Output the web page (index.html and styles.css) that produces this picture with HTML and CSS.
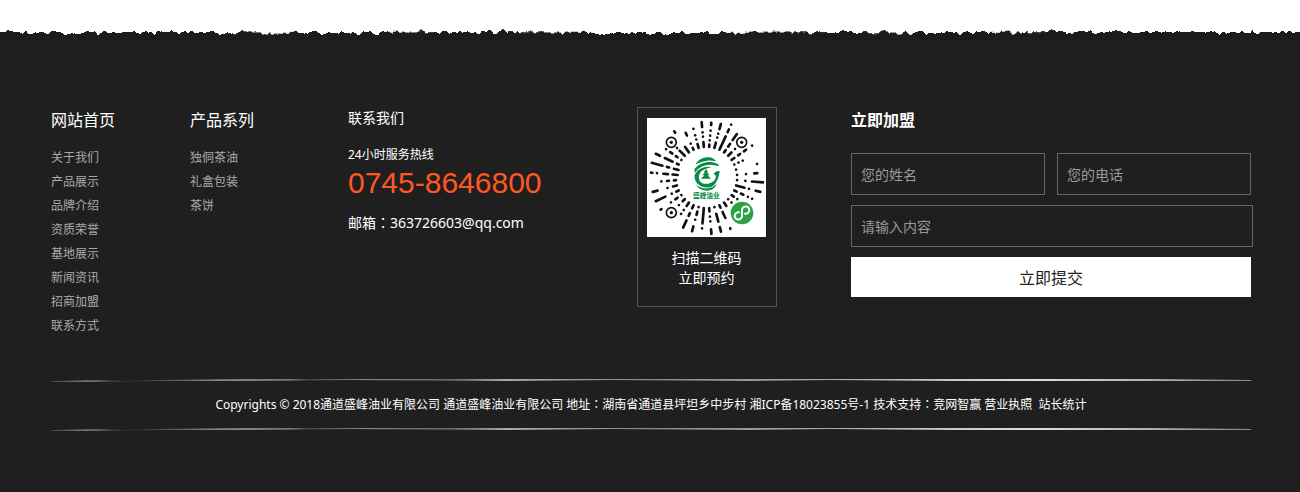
FILE: index.html
```html
<!DOCTYPE html>
<html lang="zh-CN">
<head>
<meta charset="utf-8">
<title>盛峰油业</title>
<link rel="stylesheet" href="styles.css">
</head>
<body>
<footer class="footer">
  <svg class="torn" viewBox="0 0 1300 12" preserveAspectRatio="none" aria-hidden="true">
    <filter id="rough" x="0" y="-0.3" width="1" height="1.3">
      <feTurbulence type="fractalNoise" baseFrequency="0.16 0.08" numOctaves="2" seed="8"/>
      <feDisplacementMap in="SourceGraphic" scale="9" xChannelSelector="R" yChannelSelector="G"/>
    </filter>
    <path filter="url(#rough)" fill="#1f1f1f" d="M-20 30V4H0L90 4 140 4 220 4 300 5 380 5 440 4 500 4 600 5 720 5 830 4 860 4 920 5 980 5 1060 4 1180 4 1250 4H1320V30Z"/>
  </svg>
  <div class="body">
    <div class="columns">
      <nav class="nav">
        <h2><a href="#">网站首页</a></h2>
        <ul>
          <li><a href="#">关于我们</a></li>
          <li><a href="#">产品展示</a></li>
          <li><a href="#">品牌介绍</a></li>
          <li><a href="#">资质荣誉</a></li>
          <li><a href="#">基地展示</a></li>
          <li><a href="#">新闻资讯</a></li>
          <li><a href="#">招商加盟</a></li>
          <li><a href="#">联系方式</a></li>
        </ul>
      </nav>
      <nav class="nav">
        <h2><a href="#">产品系列</a></h2>
        <ul>
          <li><a href="#">独侗茶油</a></li>
          <li><a href="#">礼盒包装</a></li>
          <li><a href="#">茶饼</a></li>
        </ul>
      </nav>
      <section class="contact">
        <h2>联系我们</h2>
        <p class="hotline">24小时服务热线</p>
        <p class="phone">0745-8646800</p>
        <p class="email">邮箱<span class="colon" lang="zh-TW">：</span>363726603@qq.com</p>
      </section>
      <figure class="code">
        <svg class="qr" viewBox="0 0 357 357" role="img" aria-label="小程序码">
          <rect width="357" height="357" fill="#fff"/>
          <g transform="translate(178.5 178.5)" fill="none" stroke="#111" stroke-width="8" stroke-linecap="round">
            <path transform="rotate(-5)" d="M0-92v-15M0-123h0M0-136h0M0-152v-15"/>
            <path transform="rotate(5)" d="M0-92v-7M0-112h0M0-126h0M0-141h0M0-158v-7"/>
            <path transform="rotate(15)" d="M0-92v-16M0-124h0M0-136h0M0-150v-16"/>
            <path transform="rotate(25)" d="M0-92v-44M0-150v-9M0-175h0"/>
            <path transform="rotate(35)" d="M0-92v-8M0-113v-10M0-137v-22"/>
            <path transform="rotate(45)" d="M0-92v-14M0-121h0"/>
            <path transform="rotate(55)" d="M0-92v-10M0-116v-7M0-137v-8M0-167h0"/>
            <path transform="rotate(65)" d="M0-92h0M0-106h0M0-120h0"/>
            <path transform="rotate(75)" d="M0-92h0M0-157h0"/>
            <path transform="rotate(85)" d="M0-92h0M0-119h0M0-144v-9"/>
            <path transform="rotate(95)" d="M0-92h0M0-117h0M0-137v-33"/>
            <path transform="rotate(105)" d="M0-92v-26M0-132h0M0-153v-14"/>
            <path transform="rotate(115)" d="M0-92v-8M0-114v-8M0-137h0M0-151h0"/>
            <path transform="rotate(125)" d="M0-92v-8M0-113h0"/>
            <path transform="rotate(135)" d="M0-92h0M0-106h0"/>
            <path transform="rotate(145)" d="M0-92v-12"/>
            <path transform="rotate(155)" d="M0-92v-8M0-114v-20M0-168v-2"/>
            <path transform="rotate(165)" d="M0-92h0M0-113v-24M0-154v-14"/>
            <path transform="rotate(175)" d="M0-92v-10M0-118h0M0-132h0M0-156v-14"/>
            <path transform="rotate(185)" d="M0-92v-46M0-153h0"/>
            <path transform="rotate(195)" d="M0-92h0M0-106v-10M0-131h0M0-152v-15"/>
            <path transform="rotate(205)" d="M0-92v-10M0-118v-9M0-142v-24"/>
            <path transform="rotate(215)" d="M0-92v-12M0-119h0M0-133h0"/>
            <path transform="rotate(225)" d="M0-92v-9M0-117h0"/>
            <path transform="rotate(235)" d="M0-92h0M0-106v-8M0-130h0M0-165v-3"/>
            <path transform="rotate(245)" d="M0-92v-8M0-115h0M0-136v-32"/>
            <path transform="rotate(255)" d="M0-92v-12M0-121h0M0-152v-15"/>
            <path transform="rotate(265)" d="M0-92v-6M0-113v-6M0-136h0"/>
            <path transform="rotate(275)" d="M0-87v-15M0-116v-14M0-149h0M0-163v-4"/>
            <path transform="rotate(285)" d="M0-87v-14M0-116v-7M0-137v-33"/>
            <path transform="rotate(295)" d="M0-92v-6M0-112v-26M0-154v-14"/>
            <path transform="rotate(305)" d="M0-92h0M0-106v-6M0-125v-8M0-148h0"/>
            <path transform="rotate(315)" d="M0-92v-22M0-125h0"/>
            <path transform="rotate(325)" d="M0-92v-20M0-164v-5"/>
            <path transform="rotate(335)" d="M0-92v-6M0-112h0M0-139v-9"/>
            <path transform="rotate(345)" d="M0-92v-12M0-118h0M0-131h0M0-151h0"/>
          </g>
          <g fill="#fff" stroke="#111" stroke-width="5">
            <circle cx="73" cy="73" r="15"/><circle cx="284" cy="73" r="15"/><circle cx="73" cy="284" r="15"/>
          </g>
          <g fill="#111"><circle cx="73" cy="73" r="5"/><circle cx="284" cy="73" r="5"/><circle cx="73" cy="284" r="5"/></g>
          <g fill="#0b8a47">
            <path d="M146 139C154 124 171 114 194 119Q203 122 207 130Q184 124 164 132Q153 136 146 139Z"/>
            <path d="M142 153C160 133 187 126 211 137L217 145Q187 135 166 145Q150 153 143 165Z"/>
            <path d="M143 170Q158 143 194 147Q171 152 160 163Q152 178 158 188Q166 200 184 197Q202 193 206 180Q208 170 199 168Q206 157 218 159Q216 187 199 203Q181 214 161 204Q140 193 143 170Z"/>
            <path d="M177 154L184 163H180L188 172H182L192 182H162L172 172H166L174 163H170Z"/>
            <path d="M145 197Q160 213 184 211Q198 209 210 197Q201 216 182 218Q158 219 145 197Z"/>
          </g>
          <text class="qr-name" x="178" y="239" text-anchor="middle">盛峰油业</text>
          <circle cx="285" cy="285" r="34" fill="#2aa245"/>
          <path d="M276 283A11 11 0 1 0 285 295V275A11 11 0 1 1 294 287" fill="none" stroke="#fff" stroke-width="6" stroke-linecap="round"/>
        </svg>
        <figcaption>扫描二维码<br>立即预约</figcaption>
      </figure>
      <form class="join">
        <h2>立即加盟</h2>
        <div class="fields">
          <input type="text" placeholder="您的姓名" aria-label="您的姓名">
          <input type="tel" placeholder="您的电话" aria-label="您的电话">
          <input class="message" type="text" placeholder="请输入内容" aria-label="请输入内容">
          <button type="button">立即提交</button>
        </div>
      </form>
    </div>
    <svg class="rule" viewBox="0 0 1200 5" preserveAspectRatio="none" aria-hidden="true">
      <defs>
        <linearGradient id="fade">
          <stop offset="0" stop-color="#444"/><stop offset=".03" stop-color="#777"/><stop offset=".05" stop-color="#444"/><stop offset=".07" stop-color="#333"/><stop offset=".14" stop-color="#888"/><stop offset=".2" stop-color="#777"/><stop offset=".215" stop-color="#444"/><stop offset=".26" stop-color="#888"/><stop offset=".33" stop-color="#666"/><stop offset=".38" stop-color="#aaa"/><stop offset=".5" stop-color="#888"/><stop offset=".65" stop-color="#aaa"/><stop offset=".82" stop-color="#ddd"/><stop offset="1" stop-color="#888"/>
        </linearGradient>
        <path id="brush" fill="url(#fade)" d="M0 3L50 2 75 3 100 2 200 1 250 1 300 1 380 1 460 1 530 1 580 1 650 1 760 1 860 1 960 1 1100 1 1200 2 1200 3 1180 3 1050 3 900 3 780 2 700 3 560 2 450 3 300 2 200 3 110 3 50 4 0 4Z"/>
      </defs>
      <use href="#brush"/>
    </svg>
    <p class="copyright">Copyrights © 2018通道盛峰油业有限公司 通道盛峰油业有限公司 地址<span class="colon" lang="zh-TW">：</span>湖南省通道县坪坦乡中步村 <a href="#">湘ICP备18023855号-1</a> 技术支持<span class="colon" lang="zh-TW">：</span><a href="#">竞网智赢</a> <a href="#">营业执照</a>&nbsp; <a href="#">站长统计</a></p>
    <svg class="rule" viewBox="0 0 1200 5" preserveAspectRatio="none" aria-hidden="true"><use href="#brush"/></svg>
  </div>
</footer>
</body>
</html>
```
FILE: styles.css
```css
* {
  box-sizing: border-box;
}

body {
  margin: 0;
  background: #fff;
  color: #fff;
  font-family: "Noto Sans", "Noto Sans CJK SC", sans-serif;
  font-size: 12px;
}

h2,
p,
ul,
figure {
  margin: 0;
  padding: 0;
  font-weight: 400;
}

ul {
  list-style: none;
}

a {
  color: inherit;
  text-decoration: none;
}

.footer {
  padding-top: 28px;
}

.torn {
  display: block;
  width: 100%;
  height: 12px;
}

.body {
  padding: 67px 49px 60px 51px;
  background: #1f1f1f;
}

.columns {
  display: grid;
  grid-template-columns: 139fr 158fr 289fr 214fr 400fr;
  align-items: start;
  margin-bottom: 40px;
}

.nav h2,
.join h2 {
  font-size: 16px;
  line-height: 26px;
}

.nav h2 {
  margin-bottom: 13px;
}

.nav li {
  color: #aaa;
  line-height: 24px;
}

.contact h2 {
  margin-bottom: 14px;
  font-size: 14px;
  line-height: 22px;
}

.hotline {
  line-height: 24px;
}

.phone {
  color: #ff5722;
  font-family: "Liberation Sans", Arial, sans-serif;
  font-size: 30px;
  line-height: 32px;
}

.email {
  margin-top: 12px;
  font-size: 14px;
  line-height: 24px;
}

.colon {
  font-family: "Noto Sans CJK TC", sans-serif;
  line-height: 1;
}

.code {
  justify-self: start;
  padding: 10px 10px 18px 9px;
  border: 1px solid #555;
  font-size: 14px;
  line-height: 20px;
  text-align: center;
}

.qr {
  display: block;
  width: 119px;
  height: 119px;
  margin-bottom: 11px;
}

.qr-name {
  fill: #0b8a47;
  font-size: 20px;
  font-weight: 700;
}

.join h2 {
  margin-bottom: 20px;
  font-weight: 700;
}

.fields {
  display: grid;
  grid-template-columns: 1fr 1fr;
  gap: 10px 12px;
}

.fields input {
  width: 100%;
  min-width: 0;
  height: 42px;
  padding: 0 9px;
  border: 1px solid #666;
  border-radius: 0;
  background: transparent;
  color: #fff;
  font: inherit;
  font-size: 14px;
}

.fields input::placeholder {
  color: #999;
}

.fields .message {
  grid-column: 1 / -1;
  width: calc(100% + 2px);
}

.fields button {
  grid-column: 1 / -1;
  height: 40px;
  padding: 0;
  border: 0;
  background: #fff;
  color: #222;
  font: inherit;
  font-size: 16px;
}

.rule {
  display: block;
  width: 100%;
  height: 5px;
}

.copyright {
  padding: 10px 0;
  line-height: 24px;
  text-align: center;
}
```
